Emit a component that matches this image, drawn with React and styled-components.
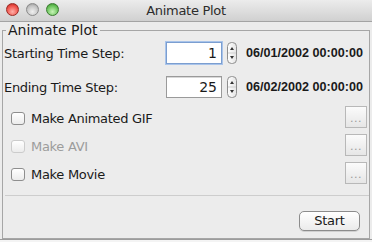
import React from 'react';
import styled, { createGlobalStyle } from 'styled-components';

const GlobalStyle = createGlobalStyle`
  html, body {
    margin: 0;
    padding: 0;
    background: #f4f4f4;
  }
  body {
    font-family: "DejaVu Sans", "Liberation Sans", sans-serif;
    font-size: 13px;
    letter-spacing: -0.3px;
    color: #1a1a1a;
  }
`;

const Window = styled.div`
  width: 372px;
  height: 239px;
  background: #ececec;
  border-bottom: 1px solid #9c9c9c;
  display: flex;
  flex-direction: column;
`;

const TitleBar = styled.div`
  height: 21px;
  border-bottom: 1px solid #a4a4a4;
  background: linear-gradient(#ececec, #d0d0d0);
  display: flex;
  align-items: center;
  position: relative;
  padding-left: 6px;
  gap: 7px;
`;

const Light = styled.span`
  width: 13px;
  height: 13px;
  border-radius: 50%;
  box-sizing: border-box;
  border: 1px solid ${(p) => p.$edge};
  background: radial-gradient(circle at 50% 70%, ${(p) => p.$glow} 0%, ${(p) => p.$color} 60%, ${(p) => p.$dark} 100%);
  margin-top: -2px;
`;

const Title = styled.div`
  position: absolute;
  left: 0;
  right: 0;
  top: 3px;
  text-align: center;
  color: #2c2c2c;
  pointer-events: none;
`;

const Group = styled.fieldset`
  margin: 0 2px;
  padding: 0 2px 5px 1px;
  border: 1px solid #a6a6a6;
  flex: 1;
  min-width: 0;
  display: flex;
  flex-direction: column;
`;

const Legend = styled.legend`
  margin-left: 2px;
  padding: 0 2px;
  font-size: 14px;
  line-height: 16px;
  letter-spacing: 0;
`;

const Steps = styled.div`
  display: flex;
  flex-direction: column;
  gap: 4px;
  margin-bottom: 1px;
`;

const StepRow = styled.div`
  height: 30px;
  display: flex;
  align-items: center;
`;

const Label = styled.span`
  width: 162px;
`;

const Field = styled.div`
  width: 56px;
  height: 22px;
  box-sizing: border-box;
  background: #fff;
  border: 1px solid ${(p) => (p.$focused ? '#7b9ed0' : '#9a9a9a')};
  box-shadow: ${(p) => (p.$focused ? '0 0 0 1px #a9c4ea' : 'inset 0 1px 0 #d8d8d8')};
  text-align: right;
  padding-right: 4px;
  line-height: 20px;
  font-size: 14px;
  letter-spacing: 0;
`;

const SpinBox = styled.svg`
  margin-left: 5px;
  flex: none;
`;

const DateText = styled.span`
  margin-left: 9px;
  font-family: "Liberation Sans", Arial, sans-serif;
  font-weight: bold;
  font-size: 12.6px;
  letter-spacing: 0;
  white-space: nowrap;
`;

const CheckRow = styled.div`
  height: 28px;
  display: flex;
  align-items: center;
  padding-left: 7px;
  color: ${(p) => (p.$disabled ? '#9c9c9c' : '#1a1a1a')};
`;

const Box = styled.span`
  width: 14px;
  height: 13px;
  box-sizing: border-box;
  border-radius: 3px;
  border: 1px solid ${(p) => (p.$disabled ? '#cccccc' : '#8e8e8e')};
  background: linear-gradient(#ffffff, #ececec);
  margin-top: 3px;
  margin-right: 6px;
`;

const CheckText = styled.span`
  flex: 1;
  margin-top: 2px;
`;

const MoreButton = styled.div`
  width: 22px;
  height: 22px;
  box-sizing: border-box;
  border: 1px solid #b8b8b8;
  background: linear-gradient(#fbfbfb, #e6e6e6);
  color: #9a9a9a;
  font-size: 11px;
  display: flex;
  align-items: center;
  justify-content: center;
  letter-spacing: 0.5px;
  padding-top: 2px;
`;

const Divider = styled.div`
  height: 1px;
  background: #cdcdcd;
  margin: 8px -2px 0 1px;
`;

const Footer = styled.div`
  display: flex;
  justify-content: flex-end;
  padding: 15px 7px 0 0;
`;

const StartButton = styled.div`
  width: 61px;
  height: 20px;
  box-sizing: border-box;
  border: 1px solid #8c8c8c;
  border-radius: 5px;
  background: linear-gradient(#ffffff, #ebebeb);
  box-shadow: 0 1px 0 #d0d0d0;
  text-align: center;
  line-height: 18px;
`;

const Spinner = () => (
  <SpinBox width="10" height="22" viewBox="0 0 10 22">
    <defs>
      <linearGradient id="sg" x1="0" y1="0" x2="1" y2="0">
        <stop offset="0" stopColor="#ffffff" />
        <stop offset="1" stopColor="#e4e4e4" />
      </linearGradient>
    </defs>
    <rect x="0.5" y="0.5" width="9" height="21" rx="4" fill="url(#sg)" stroke="#8e8e8e" />
    <line x1="1" y1="11" x2="9" y2="11" stroke="#cfcfcf" />
    <path d="M3 8 L5 5 L7 8 Z" fill="#333" />
    <path d="M3 14 L5 17 L7 14 Z" fill="#333" />
  </SpinBox>
);

const steps = [
  { label: 'Starting Time Step:', value: 1, date: '06/01/2002 00:00:00', focused: true },
  { label: 'Ending Time Step:', value: 25, date: '06/02/2002 00:00:00' },
];

const outputs = [
  { label: 'Make Animated GIF' },
  { label: 'Make AVI', disabled: true },
  { label: 'Make Movie' },
];

const App = () => (
  <>
    <GlobalStyle />
    <Window>
      <TitleBar>
        <Light $color="#f0544c" $glow="#ffb0a8" $dark="#b01c14" $edge="#9a2a24" />
        <Light $color="#c4c4c4" $glow="#f0f0f0" $dark="#8c8c8c" $edge="#8a8a8a" />
        <Light $color="#6cc45c" $glow="#c8f4b8" $dark="#2e8a22" $edge="#3a7a30" />
        <Title>Animate Plot</Title>
      </TitleBar>
      <Group>
        <Legend>Animate Plot</Legend>
        <Steps>
          {steps.map((s) => (
            <StepRow key={s.label}>
              <Label>{s.label}</Label>
              <Field $focused={s.focused}>{s.value}</Field>
              <Spinner />
              <DateText>{s.date}</DateText>
            </StepRow>
          ))}
        </Steps>
        {outputs.map((o) => (
          <CheckRow key={o.label} $disabled={o.disabled}>
            <Box $disabled={o.disabled} />
            <CheckText>{o.label}</CheckText>
            <MoreButton>...</MoreButton>
          </CheckRow>
        ))}
        <Divider />
        <Footer>
          <StartButton>Start</StartButton>
        </Footer>
      </Group>
    </Window>
  </>
);

export default App;
